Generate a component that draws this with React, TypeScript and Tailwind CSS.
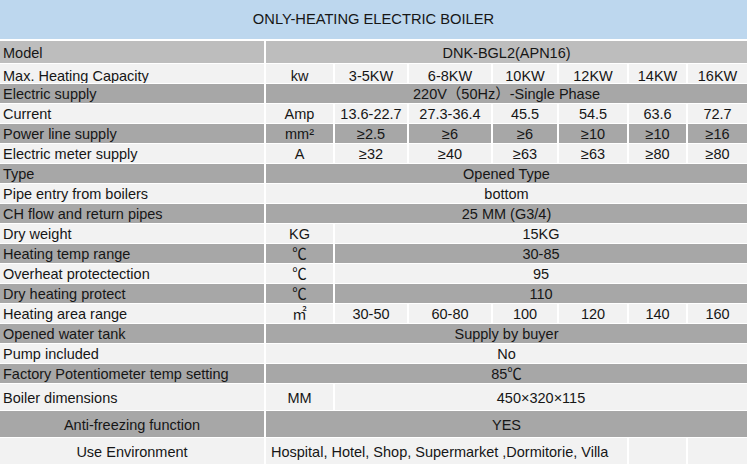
import type { ReactNode } from "react";

type Cell = { t?: ReactNode; span?: number; left?: boolean };
type Row = { label: string; labelCenter?: boolean; tone: "model" | "dark" | "light"; cells: Cell[]; low?: boolean };

const rows: Row[] = [
  { label: "Model", tone: "model", cells: [{ t: "DNK-BGL2(APN16)", span: 7 }] },
  {
    label: "Max. Heating Capacity", tone: "light", low: true,
    cells: [{ t: "kw" }, { t: "3-5KW" }, { t: "6-8KW" }, { t: "10KW" }, { t: "12KW" }, { t: "14KW" }, { t: "16KW" }],
  },
  { label: "Electric supply", tone: "dark", cells: [{ t: "220V（50Hz）-Single Phase", span: 7 }] },
  {
    label: "Current", tone: "light",
    cells: [{ t: "Amp" }, { t: "13.6-22.7" }, { t: "27.3-36.4" }, { t: "45.5" }, { t: "54.5" }, { t: "63.6" }, { t: "72.7" }],
  },
  {
    label: "Power line supply", tone: "dark",
    cells: [{ t: "mm²" }, { t: "≥2.5" }, { t: "≥6" }, { t: "≥6" }, { t: "≥10" }, { t: "≥10" }, { t: "≥16" }],
  },
  {
    label: "Electric meter supply", tone: "light",
    cells: [{ t: "A" }, { t: "≥32" }, { t: "≥40" }, { t: "≥63" }, { t: "≥63" }, { t: "≥80" }, { t: "≥80" }],
  },
  { label: "Type", tone: "dark", cells: [{ t: "Opened Type", span: 7 }] },
  { label: "Pipe entry from boilers", tone: "light", cells: [{ t: "bottom", span: 7 }] },
  { label: "CH flow and return pipes", tone: "dark", cells: [{ t: "25 MM (G3/4)", span: 7 }] },
  { label: "Dry  weight", tone: "light", cells: [{ t: "KG" }, { t: "15KG", span: 6 }] },
  { label: "Heating temp range", tone: "dark", cells: [{ t: "℃" }, { t: "30-85", span: 6 }] },
  { label: "Overheat protectection", tone: "light", cells: [{ t: "℃" }, { t: "95", span: 6 }] },
  { label: "Dry heating protect", tone: "dark", cells: [{ t: "℃" }, { t: "110", span: 6 }] },
  {
    label: "Heating area range", tone: "light",
    cells: [{ t: "㎡" }, { t: "30-50" }, { t: "60-80" }, { t: "100" }, { t: "120" }, { t: "140" }, { t: "160" }],
  },
  { label: "Opened water tank", tone: "dark", cells: [{ t: "Supply by buyer", span: 7 }] },
  { label: "Pump included", tone: "light", cells: [{ t: "No", span: 7 }] },
  { label: "Factory Potentiometer temp setting", tone: "dark", cells: [{ t: "85℃", span: 7 }] },
  { label: "Boiler dimensions", tone: "light", cells: [{ t: "MM" }, { t: "450×320×115", span: 6 }] },
  { label: "Anti-freezing function", labelCenter: true, tone: "dark", cells: [{ t: "YES", span: 7 }] },
  {
    label: "Use Environment", labelCenter: true, tone: "light",
    cells: [{ t: "Hospital, Hotel, Shop, Supermarket ,Dormitorie, Villa", span: 5, left: true }, {}, {}],
  },
];

const toneBg = {
  model: "bg-[#bdbdbd]",
  dark: "bg-[#a7a7a7]",
  light: "bg-[#f2f2f2]",
};

const spanCls: Record<number, string> = {
  1: "col-span-1",
  5: "col-span-5",
  6: "col-span-6",
  7: "col-span-7",
};

export default function App() {
  return (
    <div
      className="w-[750px] h-[470px] bg-white text-[#161616] overflow-hidden"
      style={{ fontFamily: '"Liberation Sans", Arial, "Noto Sans CJK SC", sans-serif' }}
    >
      {/* Title bar */}
      <div className="w-[747px] h-[39px] bg-[#bdd7ee] flex items-center justify-center text-[14.7px]">
        ONLY-HEATING ELECTRIC BOILER
      </div>

      {/* Spec table */}
      <div className="mt-[2px] grid w-[747px] grid-cols-[264px_67px_72px_82px_64px_68px_57px_59px] grid-rows-[22px_repeat(16,19px)_repeat(3,26px)] gap-x-[2px] gap-y-px text-[14.5px] leading-none">
        {rows.map((r, i) => (
          <Row key={i} row={r} />
        ))}
      </div>
    </div>
  );
}

function Row({ row }: { row: Row }) {
  const bg = toneBg[row.tone];
  const align = row.low ? "items-end" : "items-center pt-[2px]";
  return (
    <>
      <div
        className={`${bg} flex ${align} overflow-hidden whitespace-nowrap ${
          row.labelCenter ? "justify-center" : "pl-[3px]"
        }`}
      >
        <span>{row.label}</span>
      </div>
      {row.cells.map((c, j) => (
        <div
          key={j}
          className={`${bg} ${spanCls[c.span ?? 1]} flex ${align} ${
            c.left ? "pl-[5px]" : "justify-center"
          } overflow-hidden whitespace-nowrap`}
        >
          <span>{c.t}</span>
        </div>
      ))}
    </>
  );
}
